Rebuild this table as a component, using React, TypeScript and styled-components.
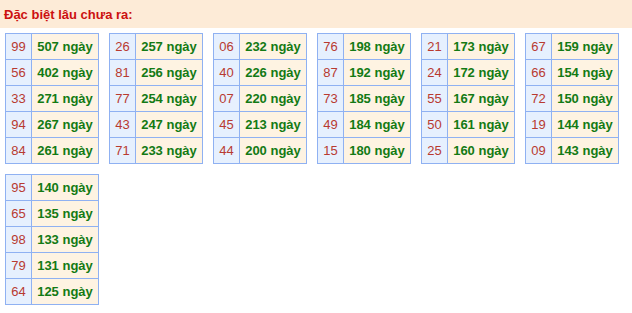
import React from 'react';
import styled, { createGlobalStyle } from 'styled-components';

// Dữ liệu: [số, số ngày chưa ra]
const bangs: [string, number][][] = [
  [['99', 507], ['56', 402], ['33', 271], ['94', 267], ['84', 261]],
  [['26', 257], ['81', 256], ['77', 254], ['43', 247], ['71', 233]],
  [['06', 232], ['40', 226], ['07', 220], ['45', 213], ['44', 200]],
  [['76', 198], ['87', 192], ['73', 185], ['49', 184], ['15', 180]],
  [['21', 173], ['24', 172], ['55', 167], ['50', 161], ['25', 160]],
  [['67', 159], ['66', 154], ['72', 150], ['19', 144], ['09', 143]],
  [['95', 140], ['65', 135], ['98', 133], ['79', 131], ['64', 125]],
];

const GlobalStyle = createGlobalStyle`
  body {
    margin: 0;
    background: #fff;
    font-family: "Liberation Sans", Arial, sans-serif;
  }
`;

const App: React.FC = () => {
  return (
    <>
      <GlobalStyle />
      <Tieude>Đặc biệt lâu chưa ra:</Tieude>
      <Khung>
        {bangs.map((bang, i) => (
          <Bang key={i}>
            <tbody>
              {bang.map(([so, ngay]) => (
                <tr key={so}>
                  <SoCell>{so}</SoCell>
                  <NgayCell>{ngay} ngày</NgayCell>
                </tr>
              ))}
            </tbody>
          </Bang>
        ))}
      </Khung>
    </>
  );
};

export default App;

const Tieude = styled.div`
  height: 28px;
  line-height: 29px;
  padding-left: 4px;
  background-color: #fdebd7;
  color: #cc1010;
  font-size: 13px;
  font-weight: bold;
`;

const Khung = styled.div`
  display: flex;
  flex-wrap: wrap;
  gap: 10px;
  padding: 5px 0 0 5px;
`;

const Bang = styled.table`
  width: 94px;
  border-collapse: collapse;
  font-size: 13px;
`;

const SoCell = styled.td`
  width: 25px;
  height: 25px;
  padding: 0;
  text-align: center;
  border: 1px solid #8fb1f2;
  background-color: #e6f0fe;
  color: #b83a30;
`;

const NgayCell = styled.td`
  height: 25px;
  padding: 0;
  text-align: center;
  border: 1px solid #8fb1f2;
  background-color: #fef3e2;
  color: #137a14;
  font-weight: bold;
`;
